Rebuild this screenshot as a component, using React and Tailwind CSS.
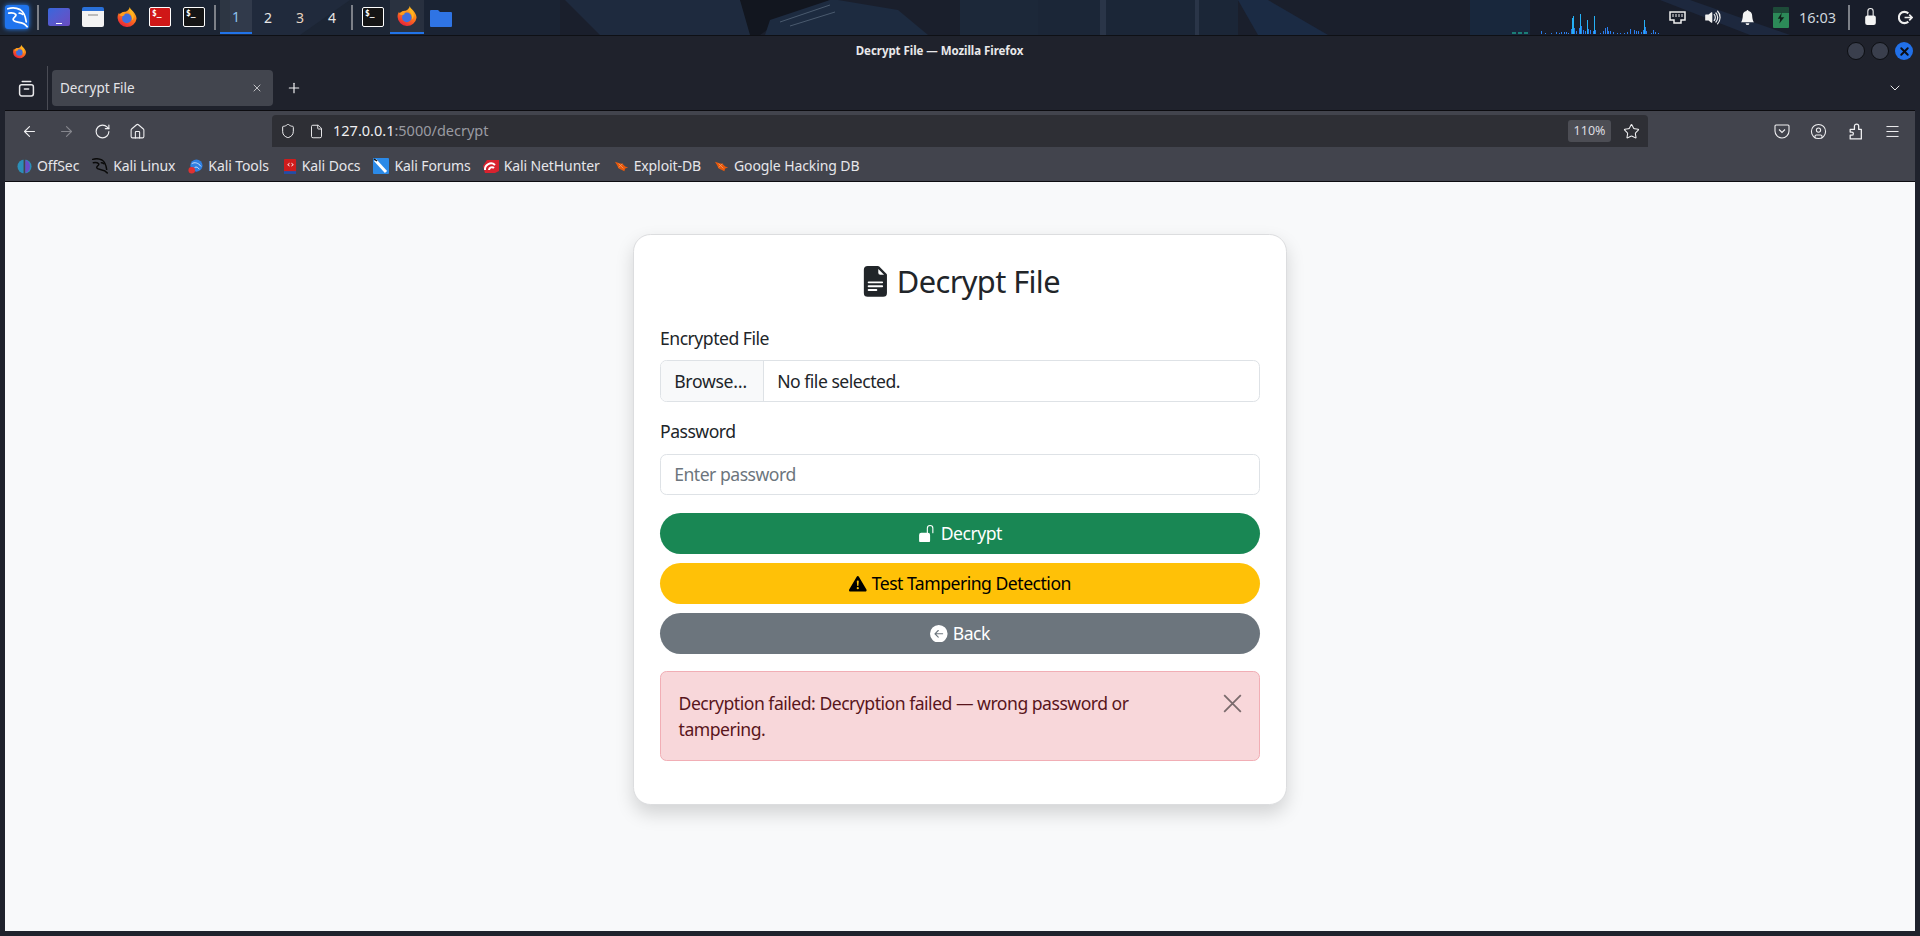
import { ArrowLeft, ArrowRight, RotateCw, House, Shield, File, Star, Menu, CircleUser, X, Plus, ChevronDown } from "lucide-react";
import { BsFileEarmarkTextFill, BsUnlockFill, BsExclamationTriangleFill, BsArrowLeftCircleFill, BsBellFill, BsVolumeUpFill, BsLockFill } from "react-icons/bs";

const UI_FONT = "font-['Noto_Sans',sans-serif]";

// bars of the cpu graph in the panel: [x, height]
const GRAPH_BARS = [[29,3],[33,1],[39,1],[44,2],[47,1],[49,2],[52,2],[54,2],[56,1],[59,5],[60,16],[61,18],[62,6],[64,3],[67,6],[68,20],[69,8],[71,4],[73,3],[75,14],[76,5],[78,4],[81,3],[82,18],[83,4],[88,1],[91,3],[93,6],[95,7],[96,3],[98,3],[101,2],[105,1],[108,1],[112,1],[115,2],[118,5],[122,4],[124,3],[126,3],[129,2],[131,4],[132,14],[133,7],[134,3],[139,1],[141,4],[143,2],[146,1]];

function Firefox({ className }) {
  return (
    <svg viewBox="0 0 24 24" className={className}>
      <defs>
        <linearGradient id="ffa" x1="0.7" y1="0" x2="0.2" y2="1">
          <stop offset="0" stopColor="#ffc21f" />
          <stop offset="0.45" stopColor="#ff7a1a" />
          <stop offset="1" stopColor="#e5173f" />
        </linearGradient>
      </defs>
      <path d="M15 1c.6 2.6 2.2 3 4 5.4 2 2.6 3.4 5 3.4 7.4A10.4 10.4 0 0 1 1.7 13c0-2.3.5-4 1.6-5.6.3 1 .7 1.7 1.4 2.2C5.8 6.9 8 6 10.3 6.4 13 4.800 14.700 3.500 15 1z" fill="url(#ffa)" />
      <circle cx="11.800" cy="13.500" r="5.200" fill="#3f6fe0" />
      <path d="M3.500 9.500c2-2.500 5-3.400 8-2.700l-2.500 2.200c1 .6 0 1.500-1.500 1.800-1.500.3-3 0-4-1.300z" fill="#ff9d1e" />
      <path d="M15 3.500c3 1.500 4.800 5 4.300 8.500-.3 1.500-1 2.800-2 3.700.8-3.500-.2-6.700-3-8.700 1-1 1-2.200.7-3.500z" fill="#ffb51f" />
    </svg>
  );
}

function KaliDragon({ className, color = "#fff", width = "2" }) {
  return (
    <svg viewBox="0 0 24 24" className={className} fill="none" stroke={color} strokeWidth={width} strokeLinecap="round" strokeLinejoin="round">
      <path d="M1 2c5-1.500 10-1 14 1 4 2.500 6 6.500 7 14" />
      <path d="M2 7c3-.5 6-.5 8 1.500 1.500 2-3 3.500-3 5.500 0 2 3 3 6.500 3.500 4 .5 7 1.500 9.500 5" />
      <path d="M14 7c2 0 3 .5 4 1.500" />
    </svg>
  );
}

function Terminal({ bg }) {
  return (
    <div className={`flex h-[20px] w-[22px] items-start rounded-[2px] border border-white px-[2px] pt-[1px] font-['DejaVu_Sans_Mono',monospace] text-[8px] font-bold leading-[10px] text-white ${bg}`}>$_</div>
  );
}

function Bug({ className }) {
  return (
    <svg viewBox="0 0 16 16" className={className}>
      <path d="M1 3l5 1.500 3 .5 3 3 3 1-3 1-1 3-3-1.500L5 10 3 6z" fill="#e8590c" />
      <path d="M5 5l5 5M9 5l-4 4" stroke="#f59f6a" strokeWidth="0.800" />
    </svg>
  );
}

function Panel() {
  return (
    <div className="relative flex h-[35px] shrink-0 items-start text-white">
      <div className="mt-[5px] ml-[5px] flex h-[24px] w-[24px] items-center justify-center rounded-[3px] bg-[#1f74ee] shadow-[0_0_5px_#2a86ff]">
        <KaliDragon className="h-[21px] w-[21px]" />
      </div>
      <div className="mt-[5px] ml-[8px] h-[25px] w-[2px] bg-[#7c8088]" />
      <div className="mt-[8px] ml-[9px] flex h-[18px] w-[22px] items-end justify-center rounded-[2px] bg-gradient-to-br from-[#3467dc] to-[#6a4bc0] pb-[2px]">
        <div className="h-[1px] w-[6px] bg-white" />
      </div>
      <div className="mt-[7px] ml-[12px] h-[20px] w-[22px] rounded-[2px] border-t-[4px] border-[#2970d8] bg-[#f3f3f3]">
        <div className="mx-auto mt-[3px] h-[2px] w-[10px] bg-[#bbb]" />
      </div>
      <Firefox className="mt-[6px] ml-[12px] h-[22px] w-[22px]" />
      <div className="mt-[7px] ml-[11px]"><Terminal bg="bg-[#d01717]" /></div>
      <div className="mt-[7px] ml-[12px]"><Terminal bg="bg-[#141414]" /></div>
      <div className="mt-[5px] ml-[9px] h-[25px] w-[2px] bg-[#7c8088]" />
      <div className={`ml-[4px] flex h-[34px] items-center text-[14px] text-[#e6e6e6] ${UI_FONT}`}>
        <div className="flex h-full w-[32px] items-center justify-center border-b-2 border-[#2173e8] bg-[#ffffff14] text-[#8fc2ee]">1</div>
        <div className="flex h-full w-[32px] items-center justify-center">2</div>
        <div className="flex h-full w-[32px] items-center justify-center text-[#e8d5c0]">3</div>
        <div className="flex h-full w-[32px] items-center justify-center">4</div>
      </div>
      <div className="mt-[5px] ml-[3px] h-[25px] w-[2px] bg-[#7c8088]" />
      <div className="mt-[7px] ml-[9px]"><Terminal bg="bg-[#141414]" /></div>
      <div className="ml-[6px] flex h-[34px] w-[34px] items-center justify-center border-b-2 border-[#2173e8] bg-[#ffffff10]">
        <Firefox className="h-[22px] w-[22px]" />
      </div>
      <svg viewBox="0 0 22 18" className="mt-[9px] ml-[6px] h-[18px] w-[22px]">
        <path d="M0 2a1 1 0 0 1 1-1h7l2 2h11a1 1 0 0 1 1 1v13a1 1 0 0 1-1 1H1a1 1 0 0 1-1-1z" fill="#2f74e4" />
      </svg>
      <svg viewBox="0 0 147 20" className="mt-[14px] ml-[1060px] h-[20px] w-[147px]">
        <rect x="0" y="18.500" width="4" height="1" fill="#1fd3b0" />
        <rect x="6" y="18.500" width="4" height="1" fill="#1fd3b0" />
        <rect x="12" y="18.500" width="4" height="1" fill="#1fd3b0" />
        {GRAPH_BARS.map(([x, h]) => (
          <rect key={x} x={x} y={20 - h} width="1" height={h} fill={h > 12 ? "#25b0f5" : "#2a7ff0"} />
        ))}
      </svg>
      <svg viewBox="0 0 17 13" className="mt-[11px] ml-[10px] h-[13px] w-[17px]" fill="none" stroke="#eee" strokeWidth="1.500">
        <path d="M1 1h15v8h-4v3H5V9H1z" />
        <path d="M4 3v3M7 3v3M10 3v3M13 3v3" strokeWidth="1" />
      </svg>
      <BsVolumeUpFill className="mt-[8px] ml-[18px] h-[19px] w-[19px] text-[#f0f0f0]" />
      <BsBellFill className="mt-[10px] ml-[17px] h-[15px] w-[15px] text-[#f4f4f4]" />
      <div className="relative mt-[7px] ml-[18px] flex h-[21px] w-[16px] items-center justify-center rounded-[1px] bg-gradient-to-b from-[#1d4a38] from-30% to-[#2c8a58] to-30%">
        <svg viewBox="0 0 10 14" className="h-[12px] w-[8px]"><path d="M6 0L1 8h3l-1 6 6-8H5z" fill="#10201a" /></svg>
      </div>
      <div className={`mt-[7px] ml-[10px] w-[37px] text-[14.500px] leading-[20px] text-[#cfd6dd] ${UI_FONT}`}>16:03</div>
      <div className="mt-[5px] ml-[12px] h-[25px] w-[2px] bg-[#7c8088]" />
      <BsLockFill className="mt-[8px] ml-[12px] h-[17px] w-[17px] text-[#f4f4f4]" />
      <svg viewBox="0 0 16 16" className="mt-[10px] ml-[19px] h-[15px] w-[15px]" fill="none" stroke="#eee" strokeWidth="2.200">
        <path d="M11 3.600A6 6 0 1 0 11 12.400" />
        <path d="M7 8h8M12 5l3 3-3 3" strokeWidth="1.800" />
      </svg>
    </div>
  );
}

function BookmarkItem({ icon, label, gapAfter }) {
  return (
    <div className={`flex items-center gap-[5px] ${gapAfter}`}>
      {icon}
      <span className="text-[14px] leading-[18px] tracking-[-0.1px] text-[#e6e6ea]">{label}</span>
    </div>
  );
}

function Browser() {
  return (
    <div className={`flex min-h-0 flex-1 flex-col border-t border-[#0e1015] bg-[#1f222c] px-[5px] pb-[5px] ${UI_FONT}`}>
      {/* title bar */}
      <div className="relative -mx-[5px] flex h-[30px] shrink-0 items-center justify-between pr-[7px] pl-[12px]">
        <Firefox className="h-[15px] w-[15px]" />
        <div className="absolute inset-x-0 pr-[41px] text-center text-[11.500px] font-bold tracking-[-0.05px] text-[#e8e8ea]">Decrypt File — Mozilla Firefox</div>
        <div className="flex items-center gap-[6px]">
          <div className="h-[18px] w-[18px] rounded-full border border-[#0c0e12] bg-[#3a3f4d]" />
          <div className="h-[18px] w-[18px] rounded-full border border-[#0c0e12] bg-[#3a3f4d]" />
          <div className="flex h-[18px] w-[18px] items-center justify-center rounded-full bg-[#2170e8]">
            <X className="h-[13px] w-[13px] text-[#0b0e14]" strokeWidth={3.500} />
          </div>
        </div>
      </div>

      {/* tab strip */}
      <div className="flex h-[45px] shrink-0 items-center border-b border-[#0c0c10] pr-[12px]">
        <div className="flex h-full w-[43px] items-center justify-center border-r border-[#4a4c55]">
          <svg viewBox="0 0 16 16" className="h-[17px] w-[17px]" fill="none" stroke="#e8e8ea" strokeWidth="1.400" strokeLinecap="round">
            <path d="M4 1.500h8" />
            <rect x="1.500" y="4.500" width="13" height="10.500" rx="2" />
            <path d="M6 8.500h4" />
          </svg>
        </div>
        <div className="ml-[4px] flex h-[36px] w-[221px] items-center justify-between rounded-[4px] bg-[#42454e] pr-[10px] pl-[8px]">
          <span className="text-[13.500px] text-[#e4e4e8]">Decrypt File</span>
          <X className="h-[12px] w-[12px] text-[#e8e8ea]" strokeWidth={1.500} />
        </div>
        <Plus className="ml-[13px] h-[16px] w-[16px] text-[#f0f0f2]" strokeWidth={1.800} />
        <ChevronDown className="ml-auto h-[16px] w-[16px] text-[#e8e8ea]" strokeWidth={1.500} />
      </div>

      {/* nav bar */}
      <div className="flex h-[36px] shrink-0 items-end bg-[#42444d] pl-[16px] text-[#f0f0f2]">
        <div className="flex h-[32px] items-center">
          <ArrowLeft className="h-[17px] w-[17px]" strokeWidth={1.600} />
          <ArrowRight className="ml-[20px] h-[17px] w-[17px] text-[#85868d]" strokeWidth={1.600} />
          <RotateCw className="ml-[19px] h-[17px] w-[17px]" strokeWidth={1.600} />
          <House className="ml-[18px] h-[17px] w-[17px]" strokeWidth={1.500} />
        </div>
        <div className="ml-[126px] flex h-[32px] w-[1376px] items-center rounded-t-[4px] bg-[#2e2f35] pr-[8px] pl-[8px]">
          <Shield className="h-[16px] w-[16px]" strokeWidth={1.500} />
          <File className="ml-[13px] h-[15px] w-[15px]" strokeWidth={1.500} />
          <span className="ml-[9px] text-[14.500px]">127.0.0.1<span className="text-[#9a9ba2]">:5000/decrypt</span></span>
          <div className="ml-auto flex h-[22px] w-[43px] items-center justify-center rounded-[3px] bg-[#4c4d54] text-[12.500px] text-[#dcdce0]">110%</div>
          <Star className="ml-[12px] h-[17px] w-[17px]" strokeWidth={1.500} />
        </div>
        <div className="ml-[126px] flex h-[32px] items-center gap-[20px]">
          <svg viewBox="0 0 16 16" className="h-[16px] w-[16px]" fill="none" stroke="currentColor" strokeWidth="1.100">
            <path d="M2 2h12a1 1 0 0 1 1 1v5a7 7 0 0 1-14 0V3a1 1 0 0 1 1-1z" />
            <path d="M5 6.500l3 3 3-3" />
          </svg>
          <CircleUser className="h-[17px] w-[17px]" strokeWidth={1.500} />
          <svg viewBox="0 0 16 16" className="h-[17px] w-[17px]" fill="none" stroke="currentColor" strokeWidth="1.200" strokeLinejoin="round">
            <path d="M3 6h4V3a2 2 0 0 1 4 0v3h2.500v9H3v-3.500h1.500a1.500 1.500 0 0 0 0-3H3z" />
          </svg>
          <Menu className="h-[17px] w-[17px]" strokeWidth={1.400} />
        </div>
      </div>

      {/* bookmarks */}
      <div className="flex h-[35px] shrink-0 items-center border-b border-[#0c0c10] bg-[#42444d] pt-[4px] pl-[12px]">
        <BookmarkItem gapAfter="mr-[13px]" label="OffSec" icon={
          <svg viewBox="0 0 16 16" className="h-[15px] w-[15px]"><ellipse cx="8" cy="8" rx="7.500" ry="7.500" fill="#2b8fb8" /><rect x="7" y="0" width="2" height="16" fill="#42444d" /><path d="M9 1a7.500 7.500 0 0 1 0 14z" fill="#6a4bc8" /></svg>
        } />
        <BookmarkItem gapAfter="mr-[13px]" label="Kali Linux" icon={<KaliDragon className="h-[16px] w-[16px]" color="#0a0a0a" width="2.200" />} />
        <BookmarkItem gapAfter="mr-[15px]" label="Kali Tools" icon={
          <svg viewBox="0 0 16 16" className="h-[15px] w-[15px]"><circle cx="9" cy="7" r="6.500" fill="#2f7fe0" /><path d="M4 5c3-2 7-1 10 3M7 9c2-1 4 0 5 2" stroke="#cfe4ff" fill="none" /><circle cx="4" cy="12" r="3.500" fill="#e03131" /></svg>
        } />
        <BookmarkItem gapAfter="mr-[13px]" label="Kali Docs" icon={
          <svg viewBox="0 0 14 16" className="h-[15px] w-[13px]"><rect width="13" height="16" rx="1" fill="#d01c1c" /><rect x="0" y="13" width="13" height="3" fill="#1f4fa8" /><path d="M4 6l2-1.500M4 6l2 1.500M10 6L8 4.500M10 6L8 7.500" stroke="#fff" /></svg>
        } />
        <BookmarkItem gapAfter="mr-[12px]" label="Kali Forums" icon={
          <svg viewBox="0 0 16 16" className="h-[16px] w-[16px]"><rect width="16" height="16" rx="1" fill="#2b8ae8" /><path d="M2 2l11 12" stroke="#fff" strokeWidth="3" /><path d="M1 1l3 2" stroke="#111" strokeWidth="1.500" /></svg>
        } />
        <BookmarkItem gapAfter="mr-[14px]" label="Kali NetHunter" icon={
          <svg viewBox="0 0 16 16" className="h-[16px] w-[16px]"><path d="M4 2h12v11l-4 2H2L0 8z" fill="#d8222e" /><path d="M2 12a6 6 0 0 1 10-5M6 12a3 3 0 0 1 5-2" stroke="#fff" strokeWidth="2" fill="none" /></svg>
        } />
        <BookmarkItem gapAfter="mr-[13px]" label="Exploit-DB" icon={<Bug className="h-[15px] w-[15px]" />} />
        <BookmarkItem gapAfter="" label="Google Hacking DB" icon={<Bug className="h-[15px] w-[15px]" />} />
      </div>

      {/* page */}
      <div className="flex min-h-0 flex-1 justify-center bg-[#f8f9fa] pt-[52px]">
        <DecryptCard />
      </div>
    </div>
  );
}

function DecryptCard() {
  const btn = "flex h-[41px] w-full items-center justify-center gap-[5px] rounded-full";
  return (
    <div className="h-fit w-[654px] rounded-[17.600px] border border-[#dcdddf] bg-white px-[26px] pt-[26.400px] pb-[25.400px] text-[17.600px] leading-[26.400px] tracking-[-0.5px] text-[#212529] shadow-[0_8.800px_17.600px_rgba(0,0,0,0.15)]">
      <h3 className="mb-[24.400px] flex h-[39px] items-center justify-center gap-[6px] pt-[2px] text-[30.800px] leading-[37px] tracking-[-0.6px]">
        <BsFileEarmarkTextFill className="h-[30.800px] w-[30.800px]" />
        Decrypt File
      </h3>

      <label className="mb-[8.800px] block">Encrypted File</label>
      <div className="mb-[16.600px] flex h-[41.800px] items-center overflow-hidden rounded-[6.500px] border border-[#dee2e6]">
        <div className="flex h-full w-[103px] items-center border-r border-[#dee2e6] bg-[#f8f9fa] pl-[13.200px] tracking-[-0.3px]">Browse…</div>
        <span className="ml-[13.200px]">No file selected.</span>
      </div>

      <label className="mb-[8.800px] block">Password</label>
      <input
        type="password"
        placeholder="Enter password"
        className="mb-[17.600px] block h-[41.800px] w-full rounded-[6.500px] border border-[#dee2e6] px-[13.200px] placeholder:text-[#6c757d]"
      />

      <button className={`${btn} mb-[9px] bg-[#198754] text-white`}>
        <BsUnlockFill className="h-[17.600px] w-[17.600px]" /> Decrypt
      </button>
      <button className={`${btn} mb-[9px] bg-[#ffc107] text-black`}>
        <BsExclamationTriangleFill className="h-[17.600px] w-[17.600px]" /> Test Tampering Detection
      </button>
      <button className={`${btn} bg-[#6c757d] text-white`}>
        <BsArrowLeftCircleFill className="h-[17.600px] w-[17.600px]" /> Back
      </button>

      <div className="relative mt-[17px] mb-[17.600px] rounded-[6.500px] border border-[#f1aeb5] bg-[#f8d7da] py-[17.600px] pr-[52.800px] pl-[17.600px] text-[#58151c]">
        Decryption failed: Decryption failed — wrong password or<br />tampering.
        <svg viewBox="0 0 16 16" className="absolute top-[22px] right-[17px] h-[19px] w-[19px]" fill="none" stroke="#7a6a6c" strokeWidth="1.500">
          <path d="M1 1l14 14M15 1L1 15" />
        </svg>
      </div>
    </div>
  );
}

export default function App() {
  return (
    <div className="relative flex h-[936px] w-[1920px] flex-col overflow-hidden bg-[#1b2433]">
      {/* wallpaper behind the panel */}
      <svg viewBox="0 0 1920 35" className="absolute top-0 left-0 h-[35px] w-[1920px]">
        <rect width="1920" height="35" fill="#1a1f2c" />
        <path d="M0 0h420v35H0z" fill="#1c2534" />
        <path d="M230 0h120l-50 35h-70z" fill="#202a3c" />
        <path d="M420 0h140v35H420z" fill="#1a2333" />
        <path d="M565 0h175l20 35H600z" fill="#1e2a3e" />
        <path d="M740 0h90l-60 28-10 7h-10z" fill="#12161f" />
        <path d="M770 20l60-20h8l60 10 30 25H765z" fill="#1d2b40" />
        <path d="M780 22l50-17M790 26l45-14" stroke="#4a5a6e" strokeWidth="1" />
        <path d="M960 0h78v35h-78z" fill="#1c2839" />
        <path d="M1038 0h200v35h-200z" fill="#1b2637" />
        <path d="M1100 0h6v35h-6zM1195 0h4v35h-4z" fill="#2a3548" />
        <path d="M1238 0h30l60 35h-70z" fill="#1b2b44" />
        <path d="M1470 0h60v35h-60z" fill="#18273c" />
        <path d="M1530 0h390v35h-390z" fill="#181d2a" />
        <path d="M1690 0l100 35h-40l-90-35z" fill="#1d283e" />
      </svg>
      <div className="relative flex min-h-0 flex-1 flex-col">
        <Panel />
        <Browser />
      </div>
    </div>
  );
}
